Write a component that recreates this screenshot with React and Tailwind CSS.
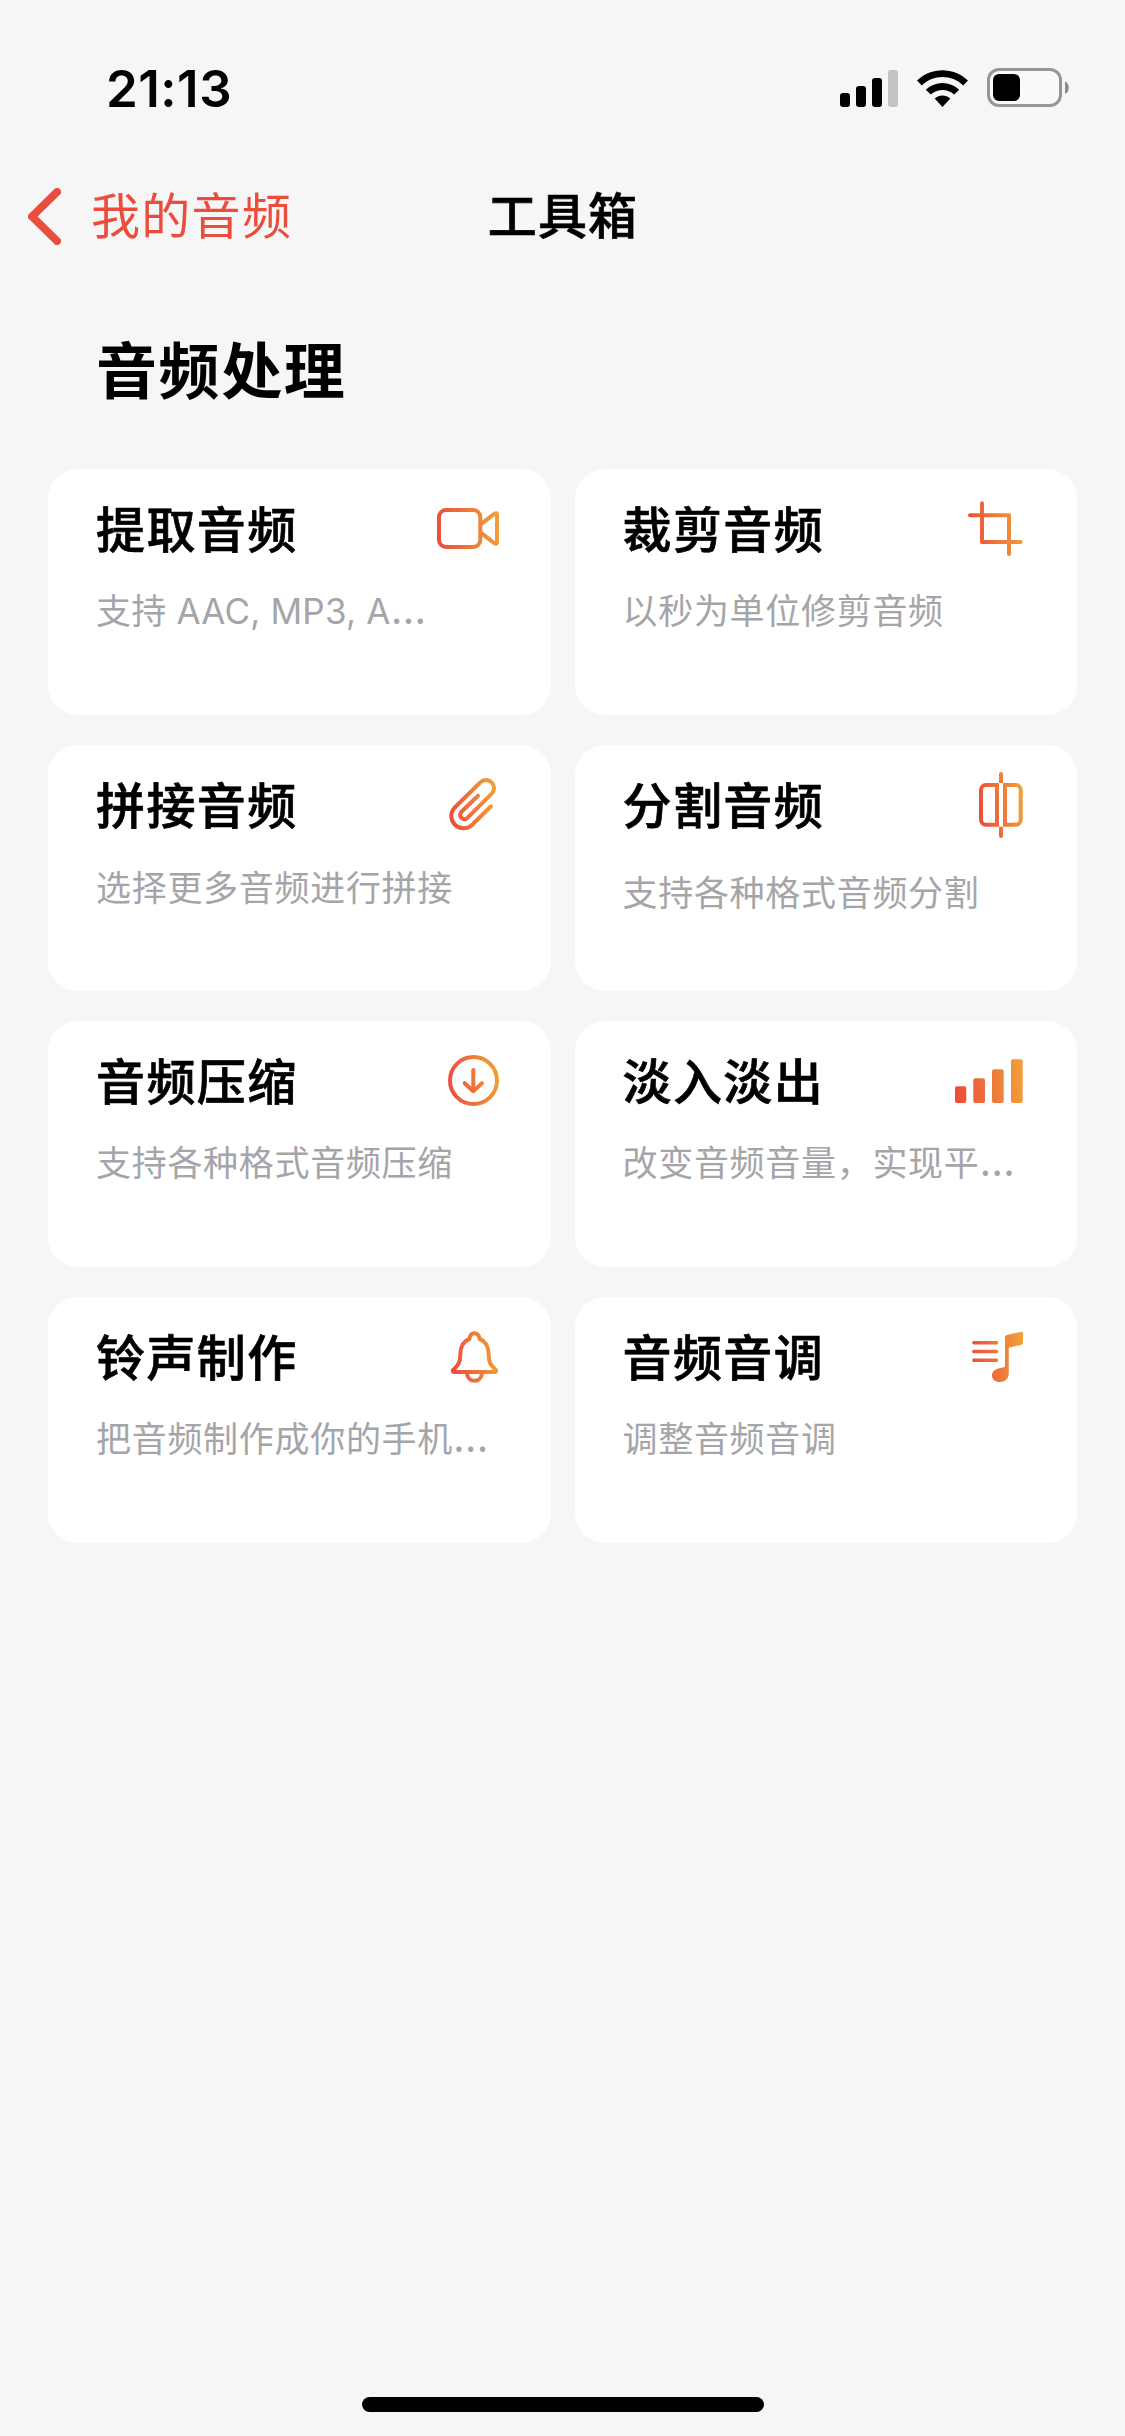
const tools = [
    { title: '提取音频', desc: '支持 AAC, MP3, A', cut: true, icon: VideoIcon, descClass: 'pt-[28px] tracking-[0.2px]' },
    { title: '裁剪音频', desc: '以秒为单位修剪音频', icon: CropIcon },
    { title: '拼接音频', desc: '选择更多音频进行拼接', icon: ClipIcon, descClass: 'pt-[29px] tracking-[0.7px]' },
    { title: '分割音频', desc: '支持各种格式音频分割', icon: SplitIcon, descClass: 'pt-[34px] tracking-[0.7px]' },
    { title: '音频压缩', desc: '支持各种格式音频压缩', icon: CompressIcon },
    { title: '淡入淡出', desc: '改变音频音量，实现平', cut: true, icon: FadeIcon },
    { title: '铃声制作', desc: '把音频制作成你的手机', cut: true, icon: BellIcon },
    { title: '音频音调', desc: '调整音频音调', icon: PitchIcon },
];

// every tool icon is drawn on the same 76px canvas with a red to orange gradient
function ToolIcon({ id, x1, x2, y1 = 44, y2 = 36, filled, children }) {
    const paint = `url(#${id})`;
    return (
        <svg
            width="76"
            height="76"
            viewBox="0 0 76 76"
            fill={filled ? paint : 'none'}
            stroke={filled ? 'none' : paint}
            strokeWidth="4"
            strokeLinecap="round"
            strokeLinejoin="round"
            className="shrink-0"
        >
            <defs>
                <linearGradient id={id} gradientUnits="userSpaceOnUse" x1={x1} y1={y1} x2={x2} y2={y2}>
                    <stop offset="0" stopColor="#eb4d3d" />
                    <stop offset="1" stopColor="#f19f37" />
                </linearGradient>
            </defs>
            {children}
        </svg>
    );
}

function VideoIcon() {
    return (
        <ToolIcon id="video" x1="10" x2="72">
            <rect x="12" y="22" width="41.3" height="37" rx="7" />
            <path d="M54 36.2 67.3 25.8Q70 24 70 27V54Q70 57 67.3 55.2L54 44.8" />
        </ToolIcon>
    );
}

function CropIcon() {
    return (
        <ToolIcon id="crop" x1="14" x2="69">
            <path d="M28 15.3V54H66.7M16 27.3H55V66" />
        </ToolIcon>
    );
}

function ClipIcon() {
    return (
        <ToolIcon id="clip" x1="21" x2="69">
            <path d="M64 42.3 44.7 61.3A12.3 12.3 0 0 1 27.3 44L53.3 18.3A8 8 0 0 1 64.7 29.7L40 54.3A4.3 4.3 0 0 1 34 48.3L51 31.7" />
        </ToolIcon>
    );
}

function SplitIcon() {
    return (
        <ToolIcon id="split" x1="25" x2="69">
            <g strokeLinejoin="miter">
                <path d="M43 21H32a5 5 0 0 0-5 5v29.7a5 5 0 0 0 5 5h11z" />
                <path d="M51 21H61.7a5 5 0 0 1 5 5v29.7a5 5 0 0 1-5 5H51z" />
            </g>
            <path d="M45 19V10a2 2 0 0 1 4 0V19zM45 62.7V72a2 2 0 0 0 4 0V62.7z" fill="url(#split)" stroke="none" />
        </ToolIcon>
    );
}

function CompressIcon() {
    return (
        <ToolIcon id="compress" x1="21" x2="72">
            <circle cx="46.5" cy="40.5" r="23.5" />
            <path d="M46.3 30V51M37.7 43.2 46.3 51.2 55 43.2" />
        </ToolIcon>
    );
}

function FadeIcon() {
    return (
        <ToolIcon id="fade" x1="1" x2="69" filled>
            <rect x="1" y="46.2" width="11.3" height="16.8" rx="2" />
            <rect x="19.3" y="38.2" width="11.7" height="24.8" rx="2" />
            <rect x="38" y="29.2" width="11.7" height="33.8" rx="2" />
            <rect x="57" y="19.2" width="11.7" height="43.8" rx="2" />
        </ToolIcon>
    );
}

function BellIcon() {
    return (
        <ToolIcon id="bell" x1="24" x2="71">
            <path d="M26.5 56Q25 54.8 26.5 53.6C32 48.5 33.3 46 33.3 38.5 33.5 30.5 36.5 25 42.3 23 42.8 19.5 44.6 17.2 47.5 17.2S52.2 19.5 52.7 23C58.5 25 61.5 30.5 61.7 38.5 61.7 46 63 48.5 68.5 53.6Q70 54.8 68.5 56Z" />
            <path d="M40 57.5C40.5 62 43.5 64.8 47.5 64.8S54.5 62 55 57.5" />
        </ToolIcon>
    );
}

function PitchIcon() {
    return (
        <ToolIcon id="pitch" x1="18" x2="69">
            <path d="M19.8 26.7H42.5M19.8 35.5H42.5M19.8 44.3H42.5" strokeWidth="3.4" />
            <path
                d="M51 20.8Q51 19.4 52.5 19L66.8 15.9Q69 15.5 69 17.6V26.8Q69 28.3 67.5 28.7L54.8 31.7V57.5C54.8 62.7 50.8 66 45.8 66 41.3 66 38 63.3 38 59.5 38 55.8 41 53 45 52.2L51 51Z"
                fill="url(#pitch)"
                stroke="none"
            />
        </ToolIcon>
    );
}

function StatusBar() {
    return (
        <header className="flex h-[132px] items-start justify-between pl-[106px] pr-14 pt-[59px]">
            <span className="text-[51px] font-semibold leading-[60px] tracking-[0.5px]">21:13</span>
            <div className="flex items-center gap-[19px] pt-[9px]">
                <svg width="58" height="38" viewBox="0 0 58 38">
                    <rect x="0" y="24" width="10" height="14" rx="3" />
                    <rect x="16" y="17" width="10" height="21" rx="3" />
                    <rect x="32" y="9" width="10" height="29" rx="3" />
                    <rect x="48" y="1" width="10" height="37" rx="3" fill="#c4c4c4" />
                </svg>
                <svg width="51" height="38" viewBox="0 0 51 38">
                    <path d="M0 11.5C14.3-2.3 36.7-2.3 51 11.5L46.2 16.5C34.6 5.2 16.4 5.2 4.8 16.5Z" />
                    <path d="M8.8 20.7C18.2 11.8 32.8 11.8 42.2 20.7L37.2 25.6C30.6 19.4 20.4 19.4 13.8 25.6Z" />
                    <path d="M17.7 29.5C22.1 25.5 28.9 25.5 33.3 29.5L25.5 38Z" />
                </svg>
                <svg width="82" height="39" viewBox="0 0 82 39">
                    <rect x="1.5" y="1.5" width="72" height="36" rx="10.5" fill="#f9f9f9" stroke="#969696" strokeWidth="3" />
                    <rect x="6" y="6" width="27" height="27" rx="6" />
                    <path d="M78 13.5C83 15.5 83 24 78 26Z" fill="#8a8a8a" />
                </svg>
            </div>
        </header>
    );
}

function NavBar() {
    return (
        <nav className="grid h-[168px] grid-cols-3 items-center">
            <a className="flex items-center gap-[30px] pl-7 text-[#eb4d3d]">
                <svg width="33" height="57" viewBox="0 0 33 57" fill="none" stroke="currentColor" strokeWidth="8" strokeLinecap="round" strokeLinejoin="round">
                    <path d="M29 4 4 28.5 29 53" />
                </svg>
                <span className="whitespace-nowrap pt-[2px] text-[49px] leading-[60px] tracking-[1.3px]">我的音频</span>
            </a>
            <h1 className="pl-px pt-px text-center text-[49px] font-medium leading-[60px] tracking-[1.2px] [-webkit-text-stroke:0.7px_black]">工具箱</h1>
        </nav>
    );
}

function ToolCard({ title, desc, cut, icon: Icon, descClass = 'pt-[28px] tracking-[0.7px]' }) {
    return (
        <div className="h-[246px] rounded-[30px] bg-white pl-12 pt-[19px]">
            <div className="flex h-[76px] items-center">
                <h3 className="w-[331px] pt-[9px] text-[49px] font-medium leading-[60px] tracking-[1.4px] [-webkit-text-stroke:0.7px_black]">{title}</h3>
                <Icon />
            </div>
            <p className={`whitespace-nowrap text-[35px] leading-[38px] text-[#a5a5a9] ${descClass}`}>
                {desc}
                {cut && <span className="text-[41px] leading-[0]">…</span>}
            </p>
        </div>
    );
}

export default function App() {
    return (
        <div className="flex h-[2436px] w-[1125px] flex-col bg-[#f6f6f6] font-[Inter,'Noto_Sans_CJK_SC',sans-serif] text-black">
            <StatusBar />
            <NavBar />
            <main className="flex-1 px-12">
                <h2 className="h-[169px] pl-12 pt-[32px] text-[61px] font-bold leading-[80px] tracking-[1.6px]">音频处理</h2>
                <div className="grid grid-cols-2 gap-x-6 gap-y-[30px]">
                    {tools.map((tool) => (
                        <ToolCard key={tool.title} {...tool} />
                    ))}
                </div>
            </main>
            <div className="mx-auto mb-6 h-[15px] w-[402px] rounded-full bg-black" />
        </div>
    );
}
